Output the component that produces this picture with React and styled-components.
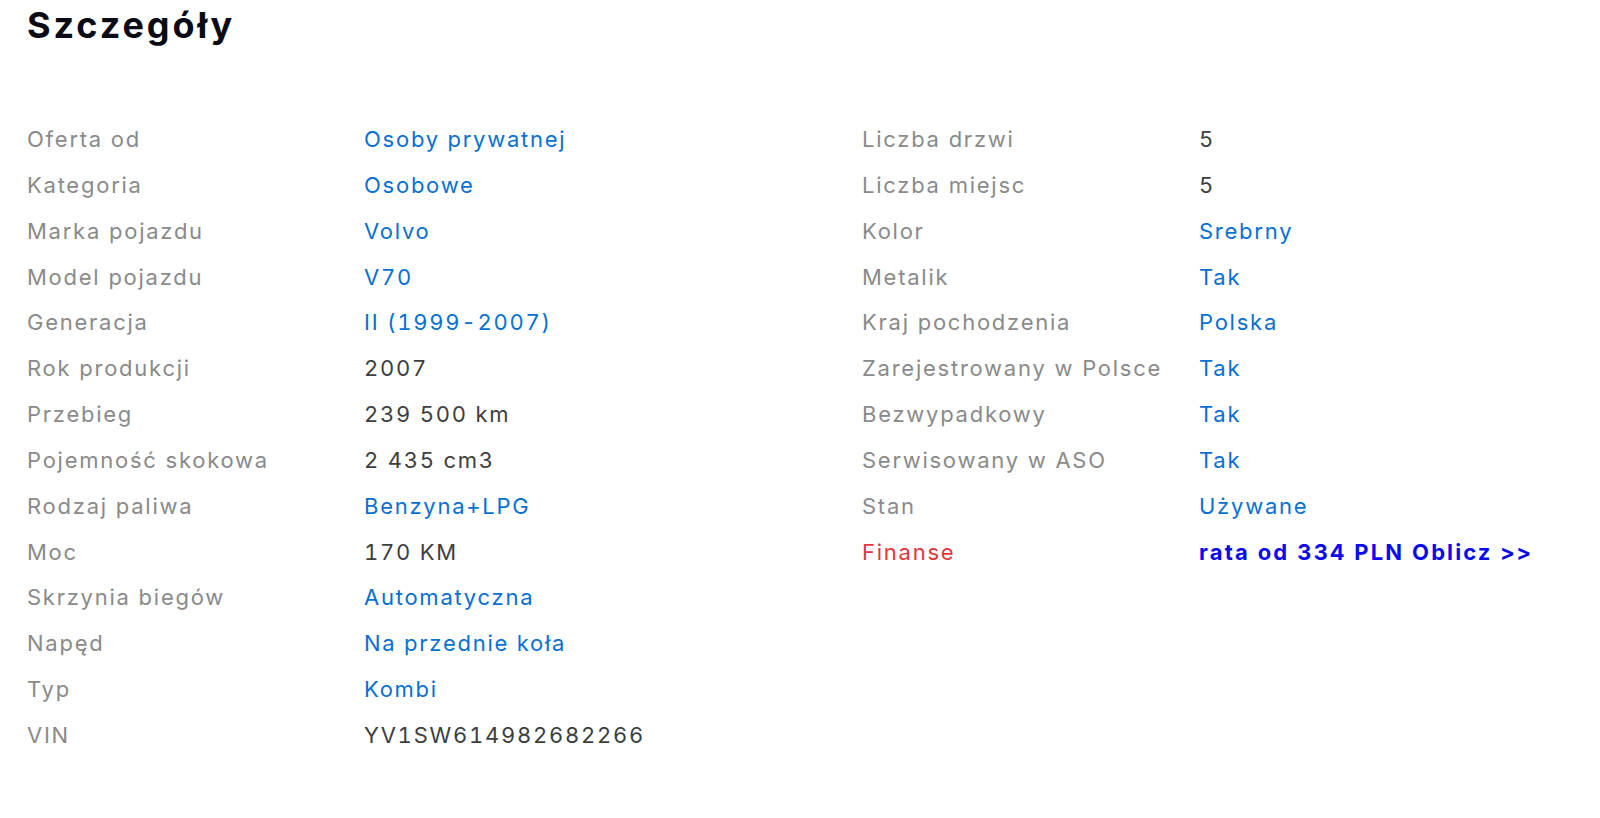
import React from "react";
import styled, { createGlobalStyle } from "styled-components";

const GlobalStyle = createGlobalStyle`
  html, body { margin: 0; padding: 0; background: #ffffff; }
  body { font-family: Inter, "Liberation Sans", Arial, sans-serif; }
`;

const Page = styled.div`
  padding: 3px 27px 40px;
`;

const Title = styled.h1`
  margin: 0;
  font-size: 36px;
  line-height: 44px;
  font-weight: 700;
  color: #0b0b16;
  letter-spacing: 2.9px;
`;

const Columns = styled.div`
  display: grid;
  grid-template-columns: 835px 1fr;
  margin-top: 70px;
`;

const List = styled.dl`
  display: grid;
  grid-template-columns: 337px 1fr;
  grid-auto-rows: 45.85px;
  margin: 0;
  align-content: start;
`;

const Label = styled.dt`
  margin: 0;
  font-size: 22px;
  line-height: 45.85px;
  letter-spacing: 1.75px;
  color: ${(p) => (p.$accent ? "#e0363e" : "#8a8a8a")};
  white-space: nowrap;
`;

const Value = styled.dd`
  margin: 0;
  font-size: 22px;
  line-height: 45.85px;
  letter-spacing: ${(p) => (p.$kind === "promo" ? "2.1px" : "1.75px")};
  font-variant-numeric: tabular-nums;
  white-space: nowrap;
  color: ${(p) =>
    p.$kind === "link" ? "#0870d0" : p.$kind === "promo" ? "#0a0aee" : "#3e3e3e"};
  font-weight: ${(p) => (p.$kind === "promo" ? 700 : 400)};
`;

const left = [
  ["Oferta od", "Osoby prywatnej", "link"],
  ["Kategoria", "Osobowe", "link"],
  ["Marka pojazdu", "Volvo", "link"],
  ["Model pojazdu", "V70", "link"],
  ["Generacja", "II (1999-2007)", "link"],
  ["Rok produkcji", "2007", "text"],
  ["Przebieg", "239 500 km", "text"],
  ["Pojemność skokowa", "2 435 cm3", "text"],
  ["Rodzaj paliwa", "Benzyna+LPG", "link"],
  ["Moc", "170 KM", "text"],
  ["Skrzynia biegów", "Automatyczna", "link"],
  ["Napęd", "Na przednie koła", "link"],
  ["Typ", "Kombi", "link"],
  ["VIN", "YV1SW614982682266", "text"],
];

const right = [
  ["Liczba drzwi", "5", "text"],
  ["Liczba miejsc", "5", "text"],
  ["Kolor", "Srebrny", "link"],
  ["Metalik", "Tak", "link"],
  ["Kraj pochodzenia", "Polska", "link"],
  ["Zarejestrowany w Polsce", "Tak", "link"],
  ["Bezwypadkowy", "Tak", "link"],
  ["Serwisowany w ASO", "Tak", "link"],
  ["Stan", "Używane", "link"],
  ["Finanse", "rata od 334 PLN Oblicz >>", "promo"],
];

function Details({ items }) {
  return (
    <List>
      {items.map(([label, value, kind]) => (
        <React.Fragment key={label}>
          <Label $accent={kind === "promo"}>{label}</Label>
          <Value $kind={kind}>{value}</Value>
        </React.Fragment>
      ))}
    </List>
  );
}

export default function App() {
  return (
    <Page>
      <GlobalStyle />
      <Title>Szczegóły</Title>
      <Columns>
        <Details items={left} />
        <Details items={right} />
      </Columns>
    </Page>
  );
}
